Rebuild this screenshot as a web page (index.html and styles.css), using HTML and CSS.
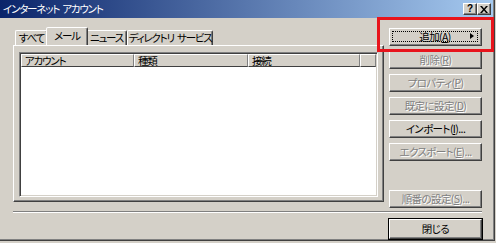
FILE: index.html
```html
<!DOCTYPE html>
<html lang="ja">

<head>
  <meta charset="UTF-8">
  <title>インターネット アカウント</title>
  <link rel="stylesheet" href="styles.css">
</head>

<body>
  <div class="window">
    <div class="titlebar">
      <span class="title">インターネット アカウント</span>
      <div class="caption-btns">
        <span class="cap-btn">?</span>
        <span class="cap-btn">
          <svg width="8" height="7" viewBox="0 0 8 7">
            <path d="M0 0h2l2 2.5L6 0h2L5 3.5 8 7H6L4 4.5 2 7H0l3-3.5z" fill="#000"/>
          </svg>
        </span>
      </div>
    </div>

    <div class="content">
      <div class="main">
        <div class="tabs-area">
          <div class="tabs">
            <span class="tab tab-all">すべて</span>
            <span class="tab tab-mail active">メール</span>
            <span class="tab tab-news">ニュース</span>
            <span class="tab tab-dir">ディレクトリ サービス</span>
          </div>
          <div class="panel">
            <div class="listview">
              <div class="lv-header">
                <span class="col col-account">アカウント</span>
                <span class="col col-type">種類</span>
                <span class="col col-conn">接続</span>
                <span class="col col-rest"></span>
              </div>
            </div>
          </div>
        </div>

        <div class="buttons">
          <button class="btn focus"><span class="btn-inner">追加(<u>A</u>)<i class="arrow"></i></span></button>
          <button class="btn" disabled>削除(<u>R</u>)</button>
          <button class="btn" disabled>プロパティ(<u>P</u>)</button>
          <button class="btn" disabled>既定に設定(<u>D</u>)</button>
          <button class="btn">インポート(<u>I</u>)...</button>
          <button class="btn" disabled>エクスポート(<u>E</u>)...</button>
          <div class="spacer"></div>
          <button class="btn" disabled>順番の設定(<u>S</u>)...</button>
        </div>
      </div>

      <div class="separator"></div>

      <div class="footer">
        <button class="btn default">閉じる</button>
      </div>
    </div>

    <!-- 注目枠 -->
    <div class="highlight"></div>
  </div>
</body>

</html>
```

FILE: styles.css
```css
* {
  margin: 0;
  padding: 0;
  box-sizing: border-box;
}

body {
  background-color: #d4d0c8;
  font-family: "Noto Sans CJK JP", sans-serif;
  font-size: 10.5px;
  letter-spacing: -1.2px;
  word-spacing: 2px;
  font-feature-settings: "palt";
  color: #000;
  white-space: nowrap;
}

.window {
  position: relative;
  width: 495px;
  height: 241px;
  background-color: #d4d0c8;
  border-right: 1px solid #404040;
  border-bottom: 1px solid #404040;
  box-shadow: inset -1px -1px #808080;
  display: flex;
  flex-direction: column;
}

.titlebar {
  height: 18px;
  margin-right: 1px;
  background: linear-gradient(to right, #0a246a, #a6caf0);
  color: #fff;
  display: flex;
  align-items: center;
  justify-content: space-between;
  padding: 0 2px 0 3px;
}

.title {
  line-height: 18px;
}

.caption-btns {
  display: flex;
}

.cap-btn {
  width: 14px;
  height: 12px;
  background-color: #d4d0c8;
  color: #000;
  border: 1px solid;
  border-color: #fff #404040 #404040 #fff;
  box-shadow: inset -1px -1px #808080;
  display: flex;
  align-items: center;
  justify-content: center;
  font-family: "Liberation Sans", sans-serif;
  font-weight: bold;
  font-size: 10px;
  letter-spacing: 0;
  line-height: 1;
}

.content {
  flex: 1;
  display: flex;
  flex-direction: column;
  padding: 10px 12px 0 13px;
}

.main {
  display: flex;
  gap: 5px;
}

.tabs-area {
  width: 371px;
}

.tabs {
  display: flex;
  height: 17px;
  padding-left: 2px;
  align-items: flex-end;
}

.tab {
  height: 15px;
  line-height: 14px;
  text-align: center;
  border: 1px solid;
  border-bottom: none;
  border-color: #fff #404040 transparent #fff;
  border-radius: 2px 2px 0 0;
  box-shadow: inset -1px 0 #808080;
}

.tab-all { width: 33px; }
.tab-mail { width: 38px; }
.tab-news { width: 41px; }
.tab-dir { width: 86px; }

.tab.active {
  position: relative;
  height: 18px;
  width: 42px;
  margin: 0 -2px 0 -2px;
  background-color: #d4d0c8;
  z-index: 1;
  line-height: 15px;
  padding-bottom: 1px;
}

.panel {
  height: 157px;
  border: 1px solid;
  border-color: #fff #404040 #404040 #fff;
  box-shadow: inset -1px -1px #808080;
  padding: 6px 5px 4px 5px;
}

.listview {
  height: 145px;
  background-color: #fff;
  border: 1px solid;
  border-color: #808080 #fff #fff #808080;
  box-shadow: inset 1px 1px #404040, inset -1px -1px #d4d0c8;
  padding: 1px;
}

.lv-header {
  display: flex;
  height: 13px;
}

.col {
  height: 13px;
  line-height: 11px;
  background-color: #d4d0c8;
  border: 1px solid;
  border-color: #fff #808080 #404040 #fff;
  padding-left: 3px;
}

.col-account { width: 113px; }
.col-type { width: 114px; }
.col-conn { width: 112px; }
.col-rest { flex: 1; }

.buttons {
  width: 93px;
  display: flex;
  flex-direction: column;
  gap: 5px;
}

.spacer {
  height: 19px;
}

.btn {
  height: 18px;
  width: 93px;
  font: inherit;
  letter-spacing: -0.6px;
  font-feature-settings: "palt";
  background-color: #d4d0c8;
  color: #000;
  border: 1px solid;
  border-color: #fff #404040 #404040 #fff;
  box-shadow: inset -1px -1px #808080;
  line-height: 14px;
  display: flex;
  align-items: center;
  justify-content: center;
}

.btn:disabled {
  color: #808080;
  text-shadow: 1px 1px #fff;
}

.btn.focus {
  padding: 2px 3px 3px 2px;
}

.btn-inner {
  flex: 1;
  height: 100%;
  border: 1px dotted #000;
  display: flex;
  align-items: center;
  justify-content: center;
  position: relative;
}

.arrow {
  position: absolute;
  right: 3px;
  top: 1px;
  width: 0;
  height: 0;
  border-top: 3.5px solid transparent;
  border-bottom: 3.5px solid transparent;
  border-left: 4px solid #000;
}

.separator {
  margin-top: 3px;
  height: 2px;
  border-top: 1px solid #808080;
  border-bottom: 1px solid #fff;
}

.footer {
  display: flex;
  justify-content: flex-end;
  padding-top: 6px;
}

.btn.default {
  height: 20px;
  border-color: #fff #404040 #404040 #fff;
  box-shadow: inset -1px -1px #808080, 0 0 0 1px #000;
}

.highlight {
  position: absolute;
  left: 377px;
  top: 17px;
  width: 117px;
  height: 35px;
  border: 3px solid #e8141c;
}
```
